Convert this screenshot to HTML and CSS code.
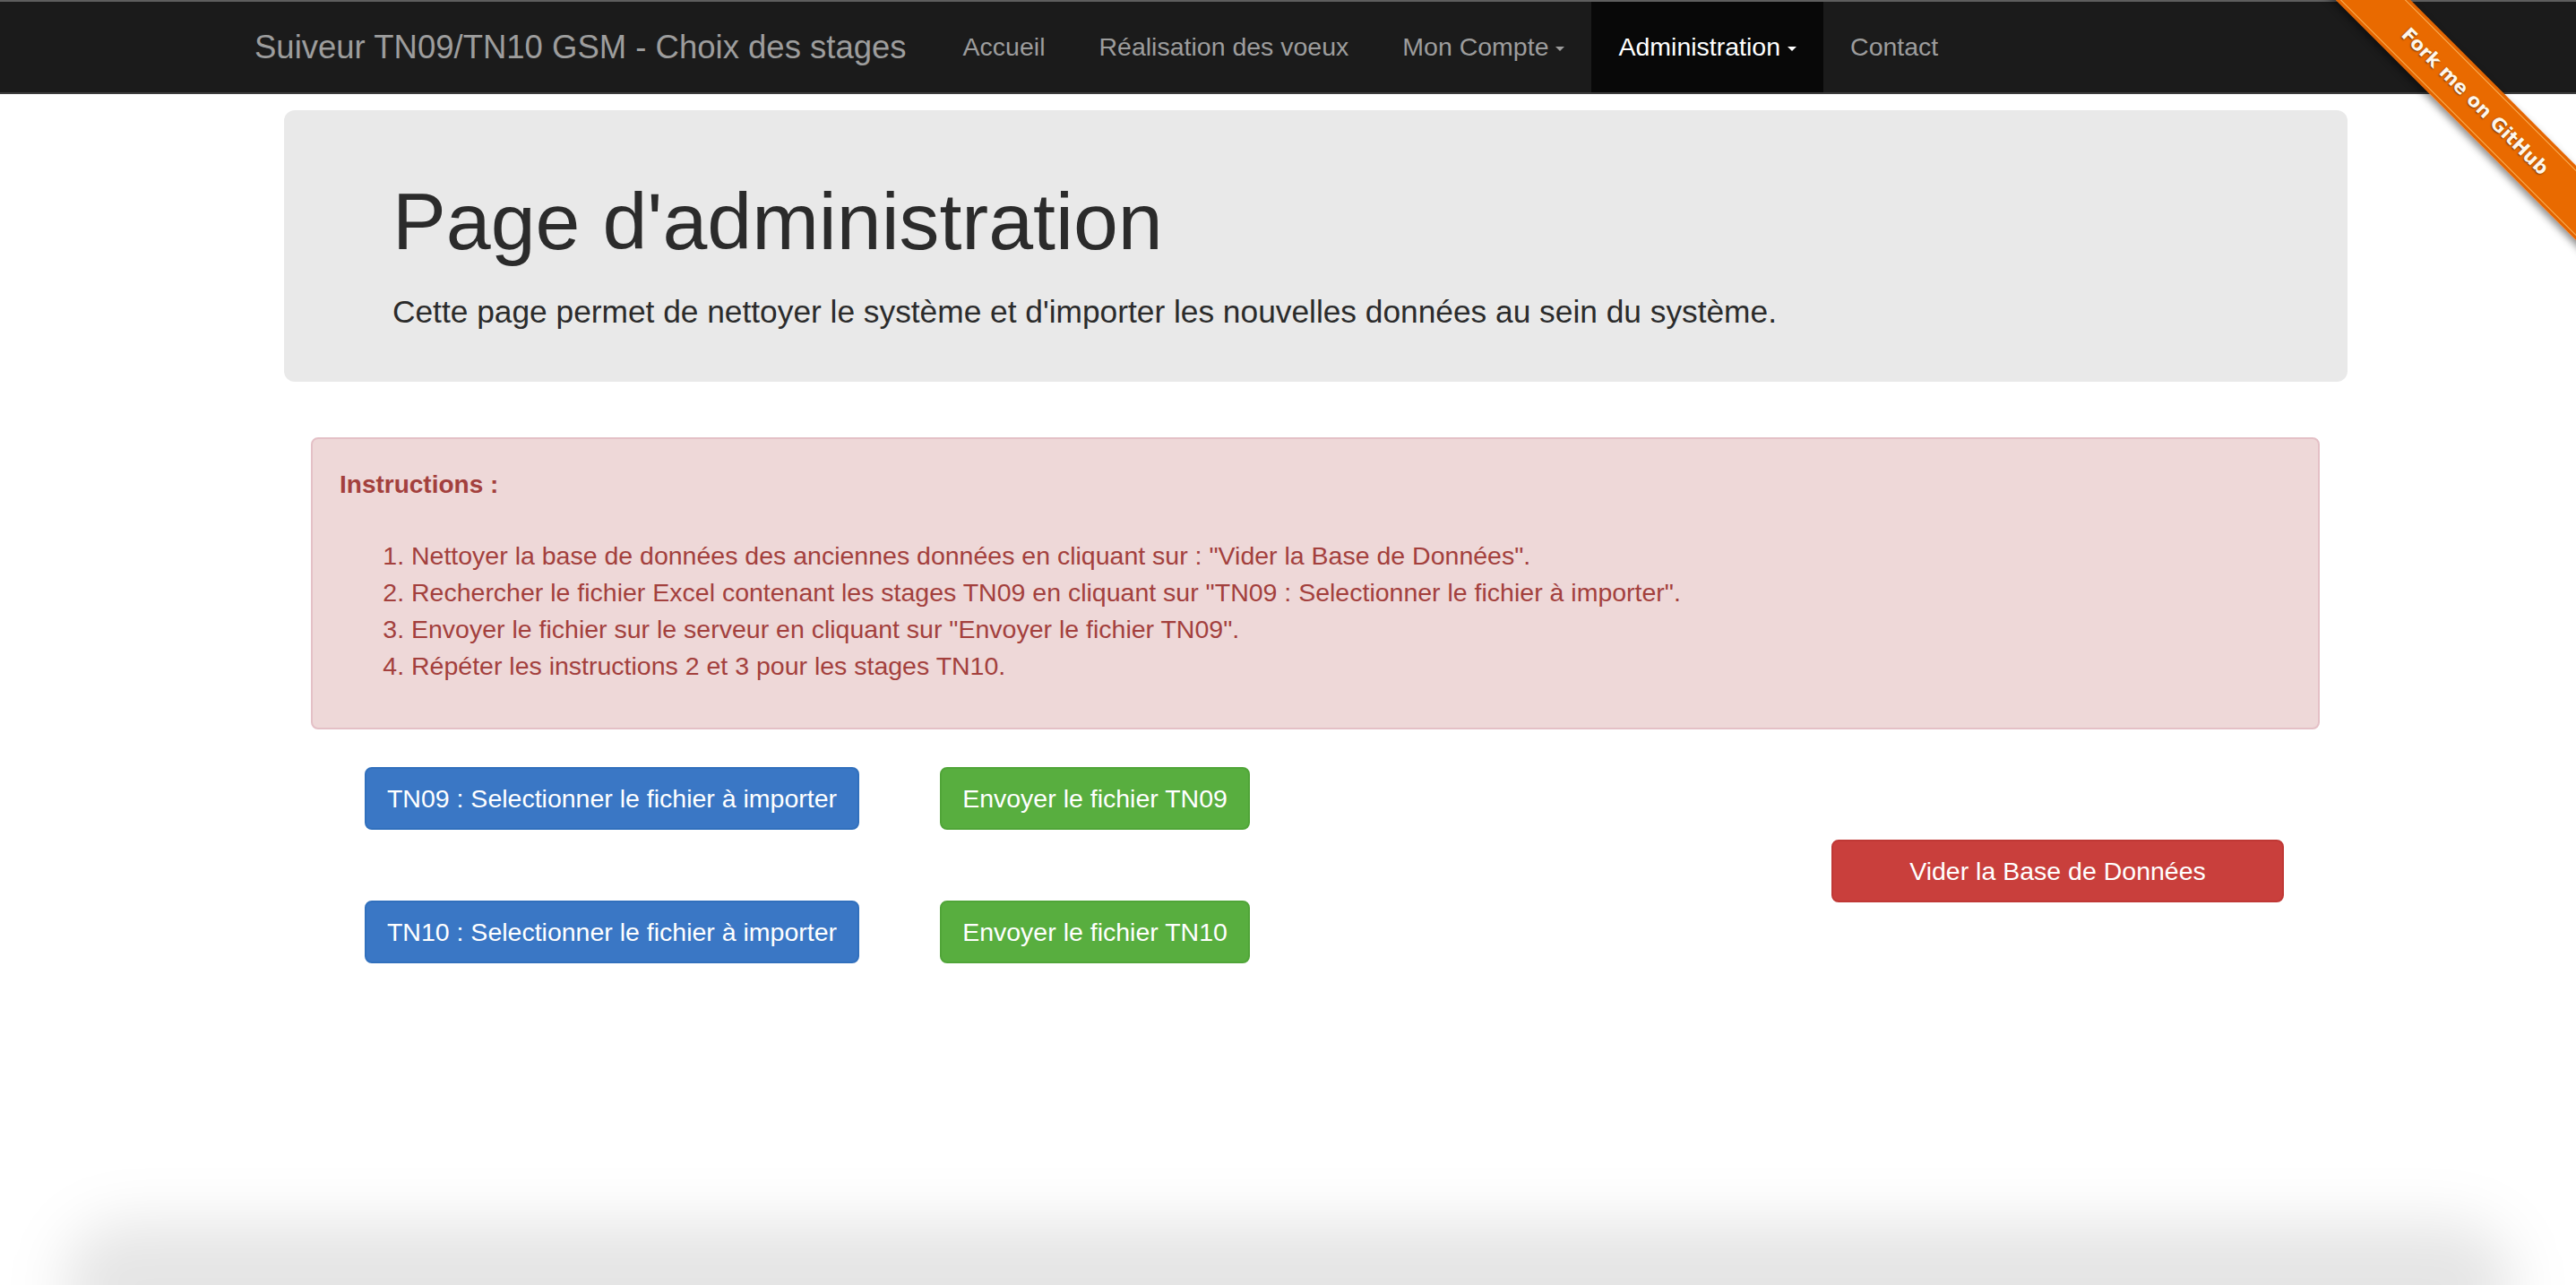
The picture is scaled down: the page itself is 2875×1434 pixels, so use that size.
FILE: index.html
```html
<!DOCTYPE html>
<html lang="fr">
<head>
<meta charset="utf-8">
<title>Suiveur TN09/TN10 GSM - Administration</title>
<link rel="stylesheet" href="styles.css">
</head>
<body>
<nav class="navbar">
  <div class="nav-inner">
    <a class="brand" href="#">Suiveur TN09/TN10 GSM - Choix des stages</a>
    <ul class="nav">
      <li><a href="#">Accueil</a></li>
      <li><a href="#">Réalisation des voeux</a></li>
      <li><a href="#">Mon Compte<span class="caret"></span></a></li>
      <li class="active"><a href="#">Administration<span class="caret"></span></a></li>
      <li><a href="#">Contact</a></li>
    </ul>
  </div>
</nav>

<div class="ribbon-wrap"><a class="ribbon" href="#">Fork me on GitHub</a></div>

<main class="page">
  <div class="jumbotron">
    <h1>Page d'administration</h1>
    <p>Cette page permet de nettoyer le système et d'importer les nouvelles données au sein du système.</p>
  </div>

  <div class="content">
    <div class="alert">
      <p class="alert-title"><strong>Instructions :</strong></p>
      <ol>
        <li>Nettoyer la base de données des anciennes données en cliquant sur : "Vider la Base de Données".</li>
        <li>Rechercher le fichier Excel contenant les stages TN09 en cliquant sur "TN09 : Selectionner le fichier à importer".</li>
        <li>Envoyer le fichier sur le serveur en cliquant sur "Envoyer le fichier TN09".</li>
        <li>Répéter les instructions 2 et 3 pour les stages TN10.</li>
      </ol>
    </div>

    <div class="actions">
      <div class="upload-grid">
        <button class="btn btn-primary">TN09 : Selectionner le fichier à importer</button>
        <button class="btn btn-success">Envoyer le fichier TN09</button>
        <button class="btn btn-primary">TN10 : Selectionner le fichier à importer</button>
        <button class="btn btn-success">Envoyer le fichier TN10</button>
      </div>
      <div class="danger-col">
        <button class="btn btn-danger">Vider la Base de Données</button>
      </div>
    </div>
  </div>
</main>

<div class="window-shadow"></div>
</body>
</html>
```

FILE: styles.css
```css
html, body {
  margin: 0;
  padding: 0;
  background: #ffffff;
  overflow: hidden;
}

body {
  font-family: "Liberation Sans", Arial, sans-serif;
  color: #333333;
  width: 2875px;
  height: 1434px;
  position: relative;
}

/* ---------- Navbar ---------- */
.navbar {
  background: #1b1b1b;
  border-top: 2px solid #5e5e5e;
  border-bottom: 2px solid #3c3c3c;
  height: 101px;
}

.nav-inner {
  display: flex;
  align-items: stretch;
  height: 100%;
  padding-left: 254px;
}

.brand {
  display: block;
  padding: 0 33px 0 30px;
  font-size: 36.5px;
  line-height: 101px;
  color: #9d9d9d;
  text-decoration: none;
  white-space: nowrap;
}

.nav {
  display: flex;
  list-style: none;
  margin: 0;
  padding: 0;
}

.nav li a {
  display: block;
  padding: 0 30px;
  font-size: 28.5px;
  line-height: 101px;
  color: #9d9d9d;
  text-decoration: none;
  white-space: nowrap;
}

.nav li.active a {
  background: #080808;
  color: #ffffff;
}

.caret {
  display: inline-block;
  width: 0;
  height: 0;
  margin-left: 8px;
  vertical-align: middle;
  border-top: 5px solid currentColor;
  border-left: 5px solid transparent;
  border-right: 5px solid transparent;
}

/* ---------- GitHub ribbon ---------- */
.ribbon-wrap {
  position: absolute;
  top: 0;
  right: 0;
  width: 298px;
  height: 298px;
  overflow: hidden;
  z-index: 10;
}

.ribbon {
  position: absolute;
  left: -45px;
  top: 84px;
  width: 460px;
  height: 59px;
  transform: rotate(45deg);
  background: linear-gradient(to bottom,
    #e56500 0, #e56500 3px,
    #f39a3c 3px, #f39a3c 5px,
    #e96a00 5px, #e96a00 calc(100% - 5px),
    #f39a3c calc(100% - 5px), #f39a3c calc(100% - 3px),
    #e56500 calc(100% - 3px));
  box-shadow: 0 4px 9px rgba(0, 0, 0, 0.45);
  color: #fff6ea;
  font-family: "DejaVu Sans", "Liberation Sans", sans-serif;
  font-weight: bold;
  font-size: 21px;
  line-height: 59px;
  text-align: center;
  text-decoration: none;
  text-shadow: 0 1px 2px rgba(0, 0, 0, 0.55);
}

/* ---------- Page ---------- */
.page {
  width: 2303px;
  margin-left: 317px;
}

.jumbotron {
  margin-top: 18px;
  background: #e9e9e9;
  border-radius: 12px;
  padding: 76px 121px 54px;
}

.jumbotron h1 {
  margin: 0 0 28px;
  font-size: 89.7px;
  line-height: 97px;
  font-weight: normal;
  color: #2b2b2b;
}

.jumbotron p {
  margin: 0;
  font-size: 35.3px;
  line-height: 48px;
  color: #2b2b2b;
}

.content {
  padding: 0 31px 0 30px;
}

/* ---------- Alert ---------- */
.alert {
  margin-top: 62px;
  background: #eed8d8;
  border: 2px solid #e4c0c6;
  border-radius: 8px;
  padding: 30px;
  color: #a3403d;
  font-size: 28.5px;
}

.alert-title {
  margin: 0 0 38px;
  font-size: 28px;
  line-height: 42px;
}

.alert ol {
  margin: 0 0 18px;
  padding-left: 80px;
  line-height: 41px;
}

/* ---------- Buttons ---------- */
.actions {
  display: flex;
  align-items: flex-start;
  margin-top: 42px;
  padding: 0 40px 0 60px;
}

.upload-grid {
  display: grid;
  grid-template-columns: 552px 346px;
  column-gap: 90px;
  row-gap: 79px;
}

.danger-col {
  margin-left: auto;
  margin-top: 81px;
  width: 505px;
}

.btn {
  display: block;
  width: 100%;
  padding: 12px 20px;
  border: 2px solid transparent;
  border-radius: 8px;
  font-family: "Liberation Sans", Arial, sans-serif;
  font-size: 28.5px;
  line-height: 42px;
  color: #ffffff;
  text-align: center;
  white-space: nowrap;
  cursor: pointer;
}

.btn-primary {
  background: #3a77c5;
  border-color: #3170bd;
}

.btn-success {
  background: #58ae3f;
  border-color: #50a538;
}

.btn-danger {
  background: #c93f3c;
  border-color: #c03835;
}

/* ---------- Window shadow at bottom ---------- */
.window-shadow {
  position: absolute;
  left: 70px;
  right: 70px;
  bottom: -70px;
  height: 140px;
  background: rgba(0, 0, 0, 0.1);
  border-radius: 70px;
  filter: blur(32px);
  pointer-events: none;
}
```
